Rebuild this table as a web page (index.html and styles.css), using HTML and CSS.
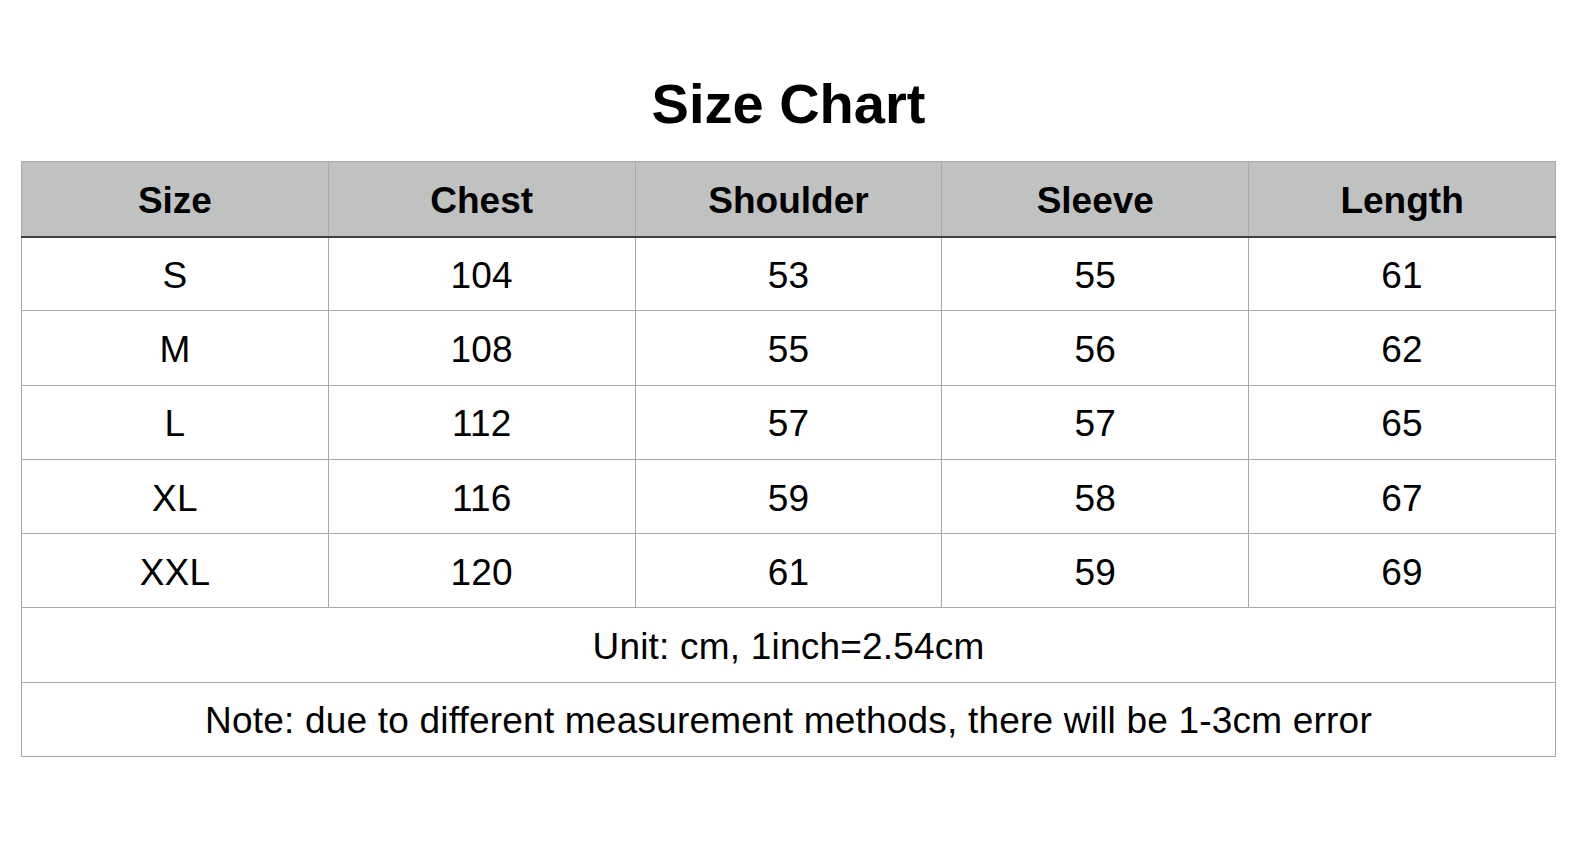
FILE: index.html
```html
<!DOCTYPE html>
<html>
<head>
<meta charset="utf-8">
<link rel="stylesheet" href="styles.css">
</head>
<body>
<div class="chart">
  <h1 class="title">Size Chart</h1>
  <table class="sizes">
    <thead>
      <tr><th>Size</th><th>Chest</th><th>Shoulder</th><th>Sleeve</th><th>Length</th></tr>
    </thead>
    <tbody>
      <tr><td>S</td><td>104</td><td>53</td><td>55</td><td>61</td></tr>
      <tr><td>M</td><td>108</td><td>55</td><td>56</td><td>62</td></tr>
      <tr><td>L</td><td>112</td><td>57</td><td>57</td><td>65</td></tr>
      <tr><td>XL</td><td>116</td><td>59</td><td>58</td><td>67</td></tr>
      <tr><td>XXL</td><td>120</td><td>61</td><td>59</td><td>69</td></tr>
      <tr><td colspan="5">Unit: cm, 1inch=2.54cm</td></tr>
      <tr><td colspan="5">Note: due to different measurement methods, there will be 1-3cm error</td></tr>
    </tbody>
  </table>
</div>
</body>
</html>
```

FILE: styles.css
```css
html, body {
  margin: 0;
  padding: 0;
  background: #ffffff;
}
body {
  font-family: "Liberation Sans", Arial, Helvetica, sans-serif;
  color: #000;
}
.chart {
  width: 1535px;
  margin-left: 21px;
  padding-top: 74px;
}
.title {
  margin: 0 0 27px 0;
  font-size: 56px;
  line-height: 60px;
  font-weight: bold;
  text-align: center;
}
.sizes {
  width: 1535px;
  border-collapse: collapse;
  table-layout: fixed;
}
.sizes th,
.sizes td {
  border: 1px solid #a9a9a9;
  text-align: center;
  padding: 4px 0 0 0;
  box-sizing: border-box;
}
.sizes th {
  background: #c0c2c1;
  font-size: 37px;
  font-weight: bold;
  height: 75px;
  border-bottom: 2px solid #3f3f3f;
}
.sizes td {
  font-size: 37px;
  font-weight: normal;
  letter-spacing: 0.2px;
  height: 74.3px;
}
```
